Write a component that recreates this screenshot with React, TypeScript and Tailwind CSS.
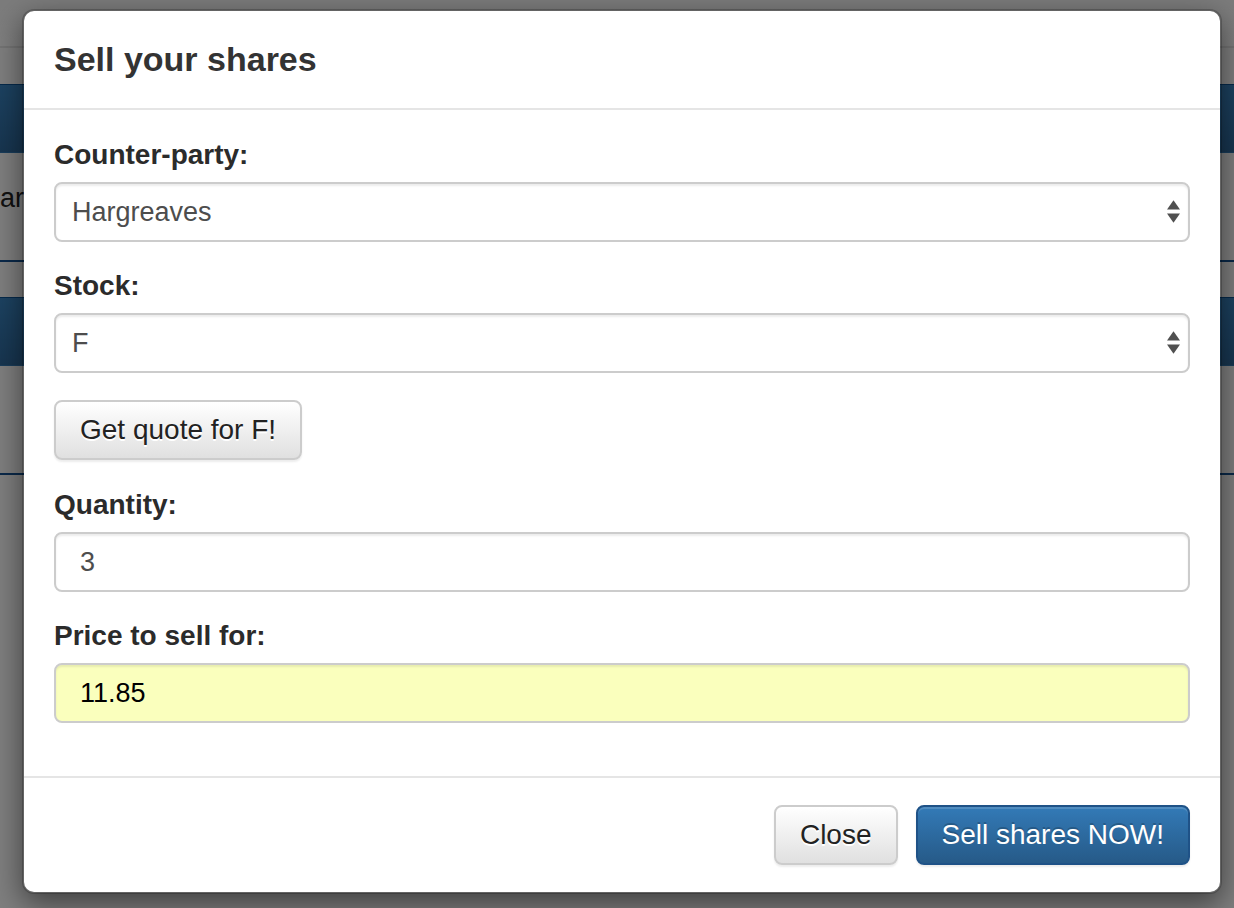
import { useState } from "react";
import type { ReactNode } from "react";

const fieldBox =
  "block h-[60px] w-full rounded-lg border-2 border-[#ccc] text-[27px] leading-9 shadow-[inset_0_2px_2px_rgba(0,0,0,0.075)] outline-none focus:border-[#66afe9]";

const buttonBox = "h-[60px] cursor-pointer rounded-lg border-2 px-6 text-[28px] leading-9";

const lightButton =
  "border-[#ccc] bg-linear-to-b from-white to-[#e0e0e0] text-[#222] shadow-[inset_0_2px_0_rgba(255,255,255,0.15),0_2px_2px_rgba(0,0,0,0.075)] [text-shadow:0_2px_0_#fff]";

const primaryButton =
  "border-[#1f5287] bg-linear-to-b from-[#337ab7] to-[#265a88] text-white shadow-[inset_0_2px_0_rgba(255,255,255,0.15),0_2px_2px_rgba(0,0,0,0.075)] [text-shadow:0_-2px_0_rgba(0,0,0,0.2)]";

function Field({ id, label, children }: { id: string; label: string; children: ReactNode }) {
  return (
    <div>
      <label htmlFor={id} className="mb-[7px] block text-[28px] leading-10 font-bold text-[#2b2b2b]">
        {label}
      </label>
      {children}
    </div>
  );
}

function SelectField({ id, label, options }: { id: string; label: string; options: string[] }) {
  return (
    <Field id={id} label={label}>
      <div className="relative">
        <select id={id} className={`${fieldBox} appearance-none bg-white pr-12 pl-4 text-[#4d4d4d]`}>
          {options.map((option) => (
            <option key={option}>{option}</option>
          ))}
        </select>
        <svg
          className="pointer-events-none absolute top-[18px] right-[9px] h-6 w-[14px]"
          viewBox="0 0 14 24"
          fill="#505050"
          aria-hidden="true"
        >
          <path d="M6.5 0.3 13 9.6H0Z" />
          <path d="M6.5 22.8 13 13.5H0Z" />
        </svg>
      </div>
    </Field>
  );
}

function PagePanel({ children }: { children?: ReactNode }) {
  return (
    <section className="mb-[35px] border-t border-b-2 border-t-[#0d5596] border-b-[#145394]">
      <div className="h-[68px] border-b border-[#337ab7] bg-linear-to-b from-[#3a86c4] to-[#2f6ba0]" />
      <div className="h-[107px] pt-[25px] text-[27px] leading-10 text-[#222]">{children}</div>
    </section>
  );
}

export default function App() {
  const [quantity, setQuantity] = useState("3");
  const [price, setPrice] = useState("11.85");

  return (
    <div className="relative min-h-screen overflow-hidden bg-white font-['Liberation_Sans',Arial,sans-serif]">
      <div className="h-12 border-b-2 border-[#e8e8e8] bg-linear-to-b from-[#f8f8f8] to-white" />
      <div className="pt-9">
        <PagePanel>ar</PagePanel>
        <PagePanel />
      </div>

      <div className="absolute inset-0 bg-black/50 pt-[9px] pr-3 pl-[22px]">
        <div
          role="dialog"
          aria-modal="true"
          aria-labelledby="dialog-title"
          className="rounded-xl border-2 border-black/20 bg-white bg-clip-padding shadow-[0_10px_30px_rgba(0,0,0,0.5)]"
        >
          <header className="border-b-2 border-[#e5e5e5] px-[30px] pt-[25px] pb-[25px]">
            <h1 id="dialog-title" className="text-[34px] leading-[47px] font-bold text-[#333]">
              Sell your shares
            </h1>
          </header>

          <div className="flex flex-col gap-6 px-[30px] pt-[25px] pb-[53px]">
            <SelectField id="counter-party" label="Counter-party:" options={["Hargreaves"]} />
            <SelectField id="stock" label="Stock:" options={["F"]} />
            <div className="pt-[3px] pb-px">
              <button type="button" className={`${buttonBox} ${lightButton}`}>
                Get quote for F!
              </button>
            </div>
            <Field id="quantity" label="Quantity:">
              <input
                id="quantity"
                type="text"
                value={quantity}
                onChange={(event) => setQuantity(event.target.value)}
                className={`${fieldBox} bg-white px-6 text-[#4d4d4d]`}
              />
            </Field>
            <Field id="price" label="Price to sell for:">
              <input
                id="price"
                type="text"
                value={price}
                onChange={(event) => setPrice(event.target.value)}
                className={`${fieldBox} bg-[#faffbd] px-6 text-black`}
              />
            </Field>
          </div>

          <footer className="flex justify-end gap-[18px] border-t-2 border-[#e5e5e5] px-[30px] pt-[27px] pb-[27px]">
            <button type="button" className={`${buttonBox} ${lightButton}`}>
              Close
            </button>
            <button type="button" className={`${buttonBox} ${primaryButton}`}>
              Sell shares NOW!
            </button>
          </footer>
        </div>
      </div>
    </div>
  );
}
